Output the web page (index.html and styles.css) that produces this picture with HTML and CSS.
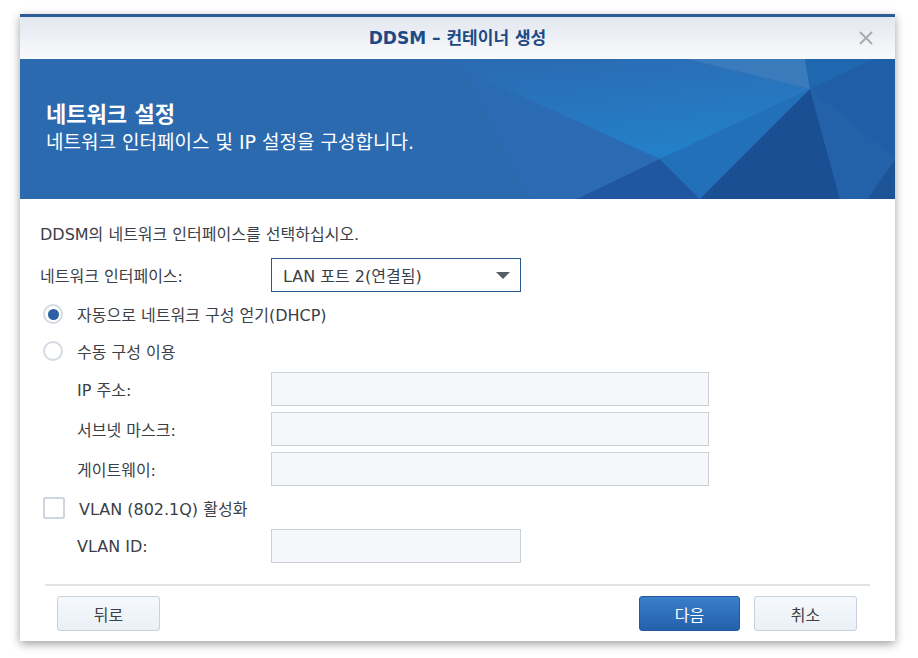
FILE: index.html
```html
<!DOCTYPE html>
<html lang="ko">
<head>
<meta charset="utf-8">
<title>DDSM - 컨테이너 생성</title>
<link rel="stylesheet" href="styles.css">
</head>
<body>
<div class="window">
  <div class="titlebar">
    <span></span>
    <span class="title">DDSM – 컨테이너 생성</span>
    <span class="close" aria-label="닫기">
      <svg width="16" height="16" viewBox="0 0 16 16"><path d="M2 2 L14 14 M14 2 L2 14" stroke="#a8acb1" stroke-width="2" fill="none"/></svg>
    </span>
  </div>
  <div class="banner">
    <svg class="facets" width="875" height="140" viewBox="0 0 875 140" preserveAspectRatio="none">
      <defs>
        <linearGradient id="g1" x1="0" y1="0" x2="0.4" y2="1">
          <stop offset="0" stop-color="#2b69b1"/>
          <stop offset="1" stop-color="#2380c8"/>
        </linearGradient>
      </defs>
      <rect width="875" height="140" fill="#2c6ab0"/>
      <polygon points="440,0 560,0 640,100 557,140 510,140" fill="#2b6bb3"/>
      <polygon points="420,0 667,0 790,30 640,100" fill="url(#g1)"/>
      <polygon points="667,0 785,0 790,30" fill="#3a7bbb"/>
      <polygon points="785,0 853,0 790,30" fill="#1f68b0"/>
      <polygon points="853,0 875,0 875,100 790,30" fill="#1e5fa7"/>
      <polygon points="557,140 640,100 680,140" fill="#1f58a0"/>
      <polygon points="640,100 790,30 680,140" fill="#2270ba"/>
      <polygon points="790,30 680,140 820,140" fill="#1b4f94"/>
      <polygon points="790,30 820,140 875,140 875,100" fill="#2361a8"/>
      <polygon points="875,100 875,140 848,140" fill="#1d5498"/>
    </svg>
    <div class="banner-text">
      <h1>네트워크 설정</h1>
      <p>네트워크 인터페이스 및 IP 설정을 구성합니다.</p>
    </div>
  </div>
  <div class="content">
    <p class="intro">DDSM의 네트워크 인터페이스를 선택하십시오.</p>
    <div class="row row-select">
      <span class="label">네트워크 인터페이스:</span>
      <div class="select"><span>LAN 포트 2(연결됨)</span><span class="caret"></span></div>
    </div>
    <div class="row row-option opt1">
      <span class="radio checked"></span><span class="opt-text">자동으로 네트워크 구성 얻기(DHCP)</span>
    </div>
    <div class="row row-option opt2">
      <span class="radio"></span><span class="opt-text">수동 구성 이용</span>
    </div>
    <div class="row row-field f1">
      <span class="label sub">IP 주소:</span><span class="input wide"></span>
    </div>
    <div class="row row-field f2">
      <span class="label sub">서브넷 마스크:</span><span class="input wide"></span>
    </div>
    <div class="row row-field f2">
      <span class="label sub">게이트웨이:</span><span class="input wide"></span>
    </div>
    <div class="row row-option opt3">
      <span class="checkbox"></span><span class="opt-text">VLAN (802.1Q) 활성화</span>
    </div>
    <div class="row row-field f1">
      <span class="label sub">VLAN ID:</span><span class="input narrow"></span>
    </div>
  </div>
  <div class="footer">
    <div class="sep"></div>
    <div class="buttons">
      <button class="btn">뒤로</button>
      <span class="spacer"></span>
      <button class="btn primary">다음</button>
      <button class="btn">취소</button>
    </div>
  </div>
</div>
</body>
</html>
```
FILE: styles.css
```css
* { box-sizing: border-box; }
html, body { margin: 0; padding: 0; background: #ffffff; }
body {
  padding: 14px 23px 17px 20px;
  font-family: "DejaVu Sans", "Noto Sans CJK KR", sans-serif;
  color: #3b4047;
  font-size: 16px;
}
.window {
  width: 875px;
  height: 627px;
  background: #ffffff;
  border-top: 3px solid #2c5b98;
  box-shadow: 0 3px 9px rgba(0, 0, 0, 0.38);
  display: flex;
  flex-direction: column;
}
.titlebar {
  height: 42px;
  display: grid;
  grid-template-columns: 1fr auto 1fr;
  align-items: center;
  background: linear-gradient(#e2e7ef, #f9fafc);
}
.title {
  font-weight: bold;
  font-size: 17px;
  color: #1d4a85;
  line-height: 20px;
}
.close {
  justify-self: end;
  margin-right: 21px;
  width: 16px;
  height: 16px;
  display: flex;
}
.banner {
  height: 140px;
  position: relative;
  overflow: hidden;
  background: #2c6ab0;
}
.facets { position: absolute; left: 0; top: 0; }
.banner-text {
  position: relative;
  padding: 43px 0 0 26px;
  color: #ffffff;
}
.banner-text h1 {
  margin: 0;
  font-size: 22px;
  line-height: 26px;
  font-weight: bold;
}
.banner-text p {
  margin: 2px 0 0;
  font-size: 19px;
  line-height: 24px;
}
.content {
  padding: 26px 20px 0;
  display: flex;
  flex-direction: column;
}
.intro {
  margin: 0;
  line-height: 20px;
}
.row {
  display: flex;
  align-items: center;
}
.label {
  width: 231px;
  flex: none;
}
.label.sub { padding-left: 37px; }
.row-select { margin-top: 13px; height: 34px; }
.select {
  width: 250px;
  height: 34px;
  border: 1px solid #2b5790;
  background: #ffffff;
  display: flex;
  align-items: center;
  justify-content: space-between;
  padding: 0 10px 0 11px;
}
.caret {
  width: 0;
  height: 0;
  border-left: 7px solid transparent;
  border-right: 7px solid transparent;
  border-top: 7px solid #545c66;
}
.row-option { height: 32px; }
.opt1 { margin-top: 6px; }
.opt2 { margin-top: 5px; }
.opt3 { margin-top: 6px; }
.row-field { height: 34px; }
.f1 { margin-top: 5px; }
.f2 { margin-top: 6px; }
.radio {
  width: 20px;
  height: 20px;
  margin-left: 3px;
  border: 2px solid #d4dae1;
  border-radius: 50%;
  background: #ffffff;
  display: flex;
  align-items: center;
  justify-content: center;
  flex: none;
}
.radio.checked::after {
  content: "";
  width: 11px;
  height: 11px;
  border-radius: 50%;
  background: #2c5fa3;
}
.checkbox {
  width: 22px;
  height: 22px;
  margin-left: 3px;
  border: 2px solid #d0d6dd;
  border-radius: 2px;
  background: #ffffff;
  flex: none;
}
.opt-text { margin-left: 14px; }
.input {
  height: 34px;
  border: 1px solid #c9d0d8;
  background: #f5f7f9;
}
.input.wide { width: 438px; }
.input.narrow { width: 250px; }
.footer {
  margin-top: 21px;
  padding: 0 25px;
}
.sep {
  height: 2px;
  background: #e2e2e2;
}
.buttons {
  margin-top: 10px;
  display: flex;
  gap: 14px;
  padding: 0 13px 0 12px;
}
.spacer { flex: 1; }
.btn {
  width: 103px;
  height: 35px;
  font-family: "DejaVu Sans", "Noto Sans CJK KR", sans-serif;
  font-size: 16px;
  color: #3b4047;
  border: 1px solid #c7d0dc;
  border-radius: 3px;
  background: linear-gradient(#f6f9fc, #eaf0f6);
  padding: 0;
}
.btn.primary {
  width: 101px;
  color: #ffffff;
  border-color: #2259a1;
  background: linear-gradient(#3a7eca, #2461ab);
}
```
